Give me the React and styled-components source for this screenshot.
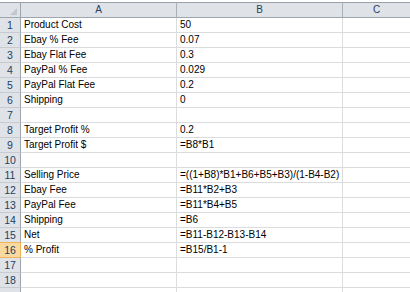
import React from 'react'
import styled, { createGlobalStyle } from 'styled-components'

const rows = [
  ['Product Cost', '50'],
  ['Ebay % Fee', '0.07'],
  ['Ebay Flat Fee', '0.3'],
  ['PayPal % Fee', '0.029'],
  ['PayPal Flat Fee', '0.2'],
  ['Shipping', '0'],
  ['', ''],
  ['Target Profit %', '0.2'],
  ['Target Profit $', '=B8*B1'],
  ['', ''],
  ['Selling Price', '=((1+B8)*B1+B6+B5+B3)/(1-B4-B2)'],
  ['Ebay Fee', '=B11*B2+B3'],
  ['PayPal Fee', '=B11*B4+B5'],
  ['Shipping', '=B6'],
  ['Net', '=B11-B12-B13-B14'],
  ['% Profit', '=B15/B1-1'],
  ['', ''],
  ['', ''],
]

const selectedRow = 16

function App() {
  return (
    <>
      <GlobalStyle />
      <Sheet>
        <Corner><CornerMark /></Corner>
        <ColHead>A</ColHead>
        <ColHead>B</ColHead>
        <ColHead last>C</ColHead>
        {rows.map((r, i) => (
          <React.Fragment key={i}>
            <RowHead selected={i + 1 === selectedRow}>{i + 1}</RowHead>
            <Cell>{r[0]}</Cell>
            <Cell>{r[1]}</Cell>
            <Cell last />
          </React.Fragment>
        ))}
        <RowHead />
        <Cell />
        <Cell />
        <Cell last />
      </Sheet>
    </>
  )
}

const GlobalStyle = createGlobalStyle`
  html, body {
    margin: 0;
    padding: 0;
    background: #ffffff;
    overflow: hidden;
  }
  body {
    padding-top: 2px;
    font-family: "Liberation Sans", Arial, sans-serif;
  }
`

const Sheet = styled.div`
  display: grid;
  grid-template-columns: 21px 156px 166px 1fr;
  grid-template-rows: 16px;
  grid-auto-rows: 15px;
  width: 410px;
`

const Corner = styled.div`
  position: relative;
  box-sizing: border-box;
  background: #dfe3e8;
  border-top: 1px solid #9aa1a9;
  border-right: 1px solid #9da5ae;
  border-bottom: 1px solid #9da5ae;
`

const CornerMark = styled.div`
  position: absolute;
  right: 3px;
  bottom: 2px;
  width: 0;
  height: 0;
  border-left: 7px solid transparent;
  border-bottom: 7px solid #c3c8ce;
`

const ColHead = styled.div`
  box-sizing: border-box;
  background: #dfe3e8;
  border-top: 1px solid #9aa1a9;
  border-right: ${p => (p.last ? '0' : '1px solid #a9b0b8')};
  border-bottom: 1px solid #9da5ae;
  display: flex;
  align-items: center;
  justify-content: center;
  font-size: 10px;
  color: #243f60;
  line-height: 1;
`

const RowHead = styled.div`
  box-sizing: border-box;
  background: ${p => (p.selected ? '#f9d99f' : '#dfe3e8')};
  border-right: 1px solid ${p => (p.selected ? '#f2b455' : '#9da5ae')};
  border-bottom: 1px solid ${p => (p.selected ? '#f2b455' : '#c6cbd1')};
  border-top: ${p => (p.selected ? '1px solid #f2b455' : '0')};
  margin-top: ${p => (p.selected ? '-1px' : '0')};
  display: flex;
  align-items: center;
  justify-content: center;
  font-size: 10.5px;
  color: #243f60;
  line-height: 1;
`

const Cell = styled.div`
  box-sizing: border-box;
  border-right: ${p => (p.last ? '0' : '1px solid #dadcdd')};
  border-bottom: 1px solid #dadcdd;
  padding: 0 0 0 3px;
  display: flex;
  align-items: center;
  font-size: 10px;
  color: #000;
  white-space: nowrap;
  overflow: visible;
  line-height: 1;
`

export default App
